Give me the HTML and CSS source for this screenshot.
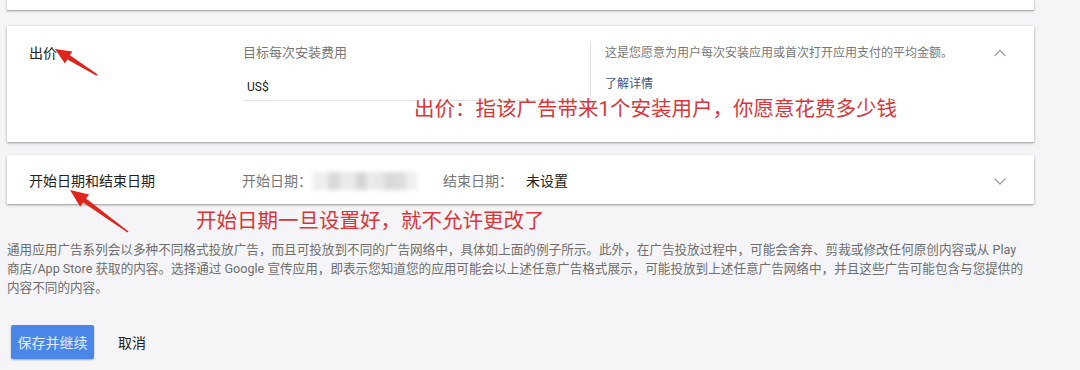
FILE: index.html
```html
<!DOCTYPE html>
<html lang="zh-CN">
<head>
  <meta charset="UTF-8">
  <title>通用应用广告系列 - 出价</title>
  <link rel="stylesheet" href="styles.css">
</head>
<body>

  <div class="page">

    <div class="panel panel-prev"></div>

    <!-- 出价 -->
    <section class="panel panel-bid">
      <div class="panel-title">出价</div>
      <div class="bid-field">
        <label class="field-label">目标每次安装费用</label>
        <div class="money-input">US$</div>
      </div>
      <div class="bid-help">
        <p>这是您愿意为用户每次安装应用或首次打开应用支付的平均金额。</p>
        <a class="help-link" href="#">了解详情</a>
      </div>
      <span class="chevron">
        <svg width="14" height="14" viewBox="0 0 14 14"><polyline points="1.5,10 7,4.5 12.5,10" /></svg>
      </span>
    </section>

    <!-- 开始日期和结束日期 -->
    <section class="panel panel-dates">
      <div class="panel-title">开始日期和结束日期</div>
      <span class="date-label">开始日期：</span>
      <span class="date-blur"></span>
      <span class="date-label end-label">结束日期：</span>
      <span class="date-value">未设置</span>
      <span class="chevron">
        <svg width="14" height="14" viewBox="0 0 14 14"><polyline points="1.5,4.5 7,10 12.5,4.5" /></svg>
      </span>
    </section>

    <p class="notice">通用应用广告系列会以多种不同格式投放广告，而且可投放到不同的广告网络中，具体如上面的例子所示。此外，在广告投放过程中，可能会舍弃、剪裁或修改任何原创内容或从 Play 商店/App Store 获取的内容。选择通过 Google 宣传应用，即表示您知道您的应用可能会以上述任意广告格式展示，可能投放到上述任意广告网络中，并且这些广告可能包含与您提供的内容不同的内容。</p>

    <div class="actions">
      <button class="save-btn">保存并继续</button>
      <button class="cancel-btn">取消</button>
    </div>

    <!-- 标注 -->
    <div class="note note-bid">出价：指该广告带来1个安装用户，你愿意花费多少钱</div>
    <div class="note note-date">开始日期一旦设置好，就不允许更改了</div>

    <svg class="arrows" width="1080" height="370" viewBox="0 0 1080 370">
      <polygon points="55,49 72.3,51.5 69.9,55.3 97.4,74.3 96.6,75.7 67.3,59.5 64.9,63.4" />
      <polygon points="70,190 89,194.5 86.1,198.6 128.5,231.4 127.5,232.6 83.1,202.6 80.2,206.7" />
    </svg>

  </div>

</body>
</html>
```

FILE: styles.css
```css
:root {
  --bg-color: #f5f5f7;
  --card-color: #ffffff;
  --text-color: #222222;
  --muted-color: #777777;
  --line-color: #e2e2e2;
  --blue: #4a87e8;
  --note-red: #d8363a;
}

body {
  margin: 0;
  background-color: var(--bg-color);
  color: var(--text-color);
  font-family: Roboto, "Noto Sans CJK SC", sans-serif;
  overflow: hidden;
}

.page {
  position: relative;
  width: 1080px;
  height: 370px;
  padding-left: 7px;
  box-sizing: border-box;
}

.panel {
  width: 1027px;
  background: var(--card-color);
  box-shadow: 0 1px 3px rgba(0, 0, 0, 0.28), 0 1px 1px rgba(0, 0, 0, 0.12);
  box-sizing: border-box;
}

.panel-prev {
  height: 10px;
  margin-bottom: 16px;
}

.panel-title {
  width: 214px;
  flex-shrink: 0;
  font-size: 14px;
  line-height: 18px;
}

/* bloque de puja */
.panel-bid {
  display: flex;
  align-items: stretch;
  padding: 15px 0 41px 22px;
}

.panel-bid .panel-title {
  margin-top: 3px;
}

.bid-field {
  width: 347px;
  padding-top: 3px;
}

.field-label {
  display: block;
  font-size: 13px;
  line-height: 18px;
  color: var(--muted-color);
}

.money-input {
  margin-top: 16px;
  width: 337px;
  padding: 0 0 4px 4px;
  font-size: 12px;
  line-height: 18px;
  border-bottom: 1px solid var(--line-color);
}

.bid-help {
  width: 380px;
  padding: 3px 0 0 14px;
  border-left: 1px solid var(--line-color);
}

.bid-help p {
  margin: 0;
  font-size: 12px;
  line-height: 18px;
  color: var(--muted-color);
}

.help-link {
  display: inline-block;
  margin-top: 13px;
  font-size: 12px;
  line-height: 18px;
  color: #3a5580;
  text-decoration: none;
}

.chevron {
  margin-left: auto;
  margin-right: 27px;
  width: 14px;
  height: 14px;
}

.panel-bid .chevron {
  margin-top: 5px;
}

.chevron svg {
  display: block;
  fill: none;
  stroke: #a0a0a0;
  stroke-width: 1.3;
}

/* fechas */
.panel-dates {
  display: flex;
  align-items: center;
  margin-top: 13px;
  height: 49px;
  padding: 3px 0 0 22px;
  font-size: 14px;
  line-height: 18px;
}

.panel-dates .panel-title {
  width: 213px;
}

.date-label {
  color: var(--muted-color);
}

.end-label {
  margin-left: 26px;
}

.date-blur {
  width: 104px;
  height: 18px;
  margin-left: 1px;
  background: linear-gradient(90deg, #eeeeee 0, #eeeeee 14px, #d9d9d9 16px, #d9d9d9 26px, #eaeaea 28px, #eaeaea 42px, #d6d6d6 44px, #d6d6d6 52px, #ececec 55px, #e6e6e6 70px, #d8d8d8 74px, #dddddd 90px, #efefef 96px);
  filter: blur(2px);
}

.date-value {
  margin-left: 13px;
}

.notice {
  margin: 36px 0 0;
  width: 1021px;
  font-size: 12.6px;
  line-height: 19px;
  color: #6e6e6e;
}

.actions {
  display: flex;
  align-items: center;
  margin-top: 28px;
  padding-left: 4px;
}

.save-btn {
  width: 83px;
  height: 34px;
  padding: 0;
  border: none;
  border-radius: 2px;
  background-color: var(--blue);
  color: #e4edfc;
  font-family: inherit;
  font-size: 14px;
  box-shadow: 0 1px 2px rgba(0, 0, 0, 0.3);
}

.cancel-btn {
  margin-left: 12px;
  padding: 0 12px;
  border: none;
  background: none;
  color: var(--text-color);
  font-family: inherit;
  font-size: 14px;
}

/* anotaciones en rojo */
.note {
  position: absolute;
  color: var(--note-red);
  font-size: 20.5px;
  line-height: 24px;
  white-space: nowrap;
}

.note-bid {
  left: 414px;
  top: 97px;
}

.note-date {
  left: 196px;
  top: 209px;
}

.arrows {
  position: absolute;
  left: 0;
  top: 0;
  pointer-events: none;
}

.arrows polygon {
  fill: #e0251d;
}
```
